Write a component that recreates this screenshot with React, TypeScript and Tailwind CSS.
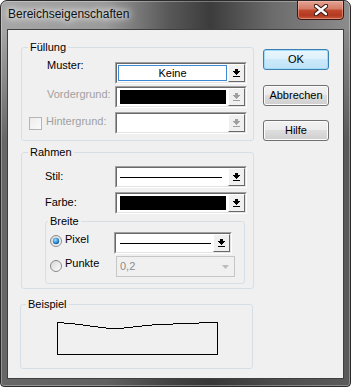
import React from "react";

const DropArrow = ({ disabled }: { disabled?: boolean }) => (
  <svg width="7" height="8" viewBox="0 0 7 8" shapeRendering="crispEdges" fill={disabled ? "#a0a0a0" : "#000"}>
    <rect x="2" y="0" width="3" height="2" />
    <rect x="0" y="2" width="7" height="1" />
    <rect x="1" y="3" width="5" height="1" />
    <rect x="2" y="4" width="3" height="1" />
    <rect x="3" y="5" width="1" height="1" />
    <rect x="0" y="7" width="7" height="1" />
  </svg>
);

function Combo({
  className,
  arrowDisabled,
  children,
}: {
  className: string;
  arrowDisabled?: boolean;
  children?: React.ReactNode;
}) {
  return (
    <div className={`flex h-[22px] shrink-0 border border-t-[#a0a0a0] border-l-[#a0a0a0] border-r-white border-b-white ${className}`}>
      <div className="flex flex-1 border border-t-[#696969] border-l-[#696969] border-r-[#e3e3e3] border-b-[#e3e3e3] bg-white">
        <div className="flex flex-1 p-[1px]">{children}</div>
        <div className="flex w-[17px] items-center justify-center border border-t-white border-l-white border-r-[#696969] border-b-[#696969] bg-[#f0f0f0]">
          <DropArrow disabled={arrowDisabled} />
        </div>
      </div>
    </div>
  );
}

function Group({
  title,
  className = "",
  legendClass = "ml-[6px]",
  children,
}: {
  title: string;
  className?: string;
  legendClass?: string;
  children: React.ReactNode;
}) {
  return (
    <fieldset className={`flex flex-col rounded-[3px] border border-[#d5dfe5] ${className}`}>
      <legend className={`px-[2px] text-[11px] leading-[12px] ${legendClass}`}>{title}</legend>
      {children}
    </fieldset>
  );
}

const Radio = ({ checked }: { checked?: boolean }) => (
  <svg width="12" height="12" viewBox="0 0 12 12" className="shrink-0">
    <defs>
      <linearGradient id={checked ? "rbg1" : "rbg2"} x1="0" y1="0" x2="1" y2="1">
        <stop offset="0" stopColor="#d6d6d6" />
        <stop offset="1" stopColor="#ffffff" />
      </linearGradient>
      <radialGradient id="rdot" cx="0.4" cy="0.35" r="0.7">
        <stop offset="0" stopColor="#a9ddf9" />
        <stop offset="0.6" stopColor="#2c8fd6" />
        <stop offset="1" stopColor="#11508f" />
      </radialGradient>
    </defs>
    <circle cx="6" cy="6" r="5.5" fill={`url(#${checked ? "rbg1" : "rbg2"})`} stroke="#8a8a8a" />
    {checked && <circle cx="6" cy="6" r="3.2" fill="url(#rdot)" />}
  </svg>
);

const btnBase = "flex h-[21px] w-[66px] items-center justify-center rounded-[3px] border text-[11px] leading-none text-black";
const btnGray =
  "border-[#707070] bg-[linear-gradient(#f2f2f2_0%,#ebebeb_50%,#dddddd_50%,#cfcfcf_100%)] shadow-[inset_0_0_0_1px_#fcfcfc]";
const btnDefault =
  "border-[#3c7fb1] bg-[linear-gradient(#eaf6fd_0%,#dcf0fb_50%,#cbe9fa_50%,#bfe3f7_100%)] shadow-[inset_0_0_0_1px_#9fdcf8]";

export default function App() {
  return (
    <div className="font-['Liberation_Sans',Arial,sans-serif] text-[11px] text-black">
      <div className="flex h-[387px] w-[351px] flex-col overflow-hidden rounded-t-[7px] rounded-b-[4px] border border-[#2a2a2a] bg-[linear-gradient(180deg,rgba(0,0,0,0)_0px,rgba(0,0,0,0)_28px,rgba(50,50,50,0.55)_140px),linear-gradient(90deg,#a6a6a6_0%,#9a9a9a_30%,#585858_48%,#3c3c3c_60%,#6c6c6c_78%,#8c8c8c_100%)] shadow-[inset_0_0_0_1px_rgba(255,255,255,0.3)]">
        <div className="flex h-[28px] shrink-0 items-start justify-between pl-[7px] pr-[6px]">
          <span className="mt-[6px] text-[12px] leading-[14px] text-[#111] [text-shadow:0_0_6px_#fff,0_0_10px_#fff]">
            Bereichseigenschaften
          </span>
          <div className="-mt-px flex h-[20px] w-[47px] items-center justify-center rounded-b-[4px] border border-[#3f1510] bg-[linear-gradient(#e4a393_0%,#d27a65_45%,#c2482e_50%,#b33a20_80%,#c65a3c_100%)] shadow-[inset_0_0_0_1px_rgba(255,200,190,0.45)]">
            <svg width="14" height="12" viewBox="0 0 14 12">
              <path d="M2 2 L12 10 M12 2 L2 10" stroke="#3a1a16" strokeWidth="4.5" strokeLinecap="round" />
              <path d="M2 2 L12 10 M12 2 L2 10" stroke="#ffffff" strokeWidth="2.4" strokeLinecap="round" />
            </svg>
          </div>
        </div>

        <div className="mx-[6px] flex h-[350px] shrink-0 border border-[#3f3f3f] bg-[#f0f0f0]">
          <div className="ml-[13px] flex w-[233px] flex-col pt-[11px]">
            <Group title="Füllung" className="w-[233px] pb-[6px]">
              <div className="mt-[9px] flex items-start">
                <div className="-mt-[3px] w-[93px] pl-[25px] leading-[13px]">Muster:</div>
                <Combo className="w-[132px]">
                  <div className="flex flex-1 items-center justify-center border border-[#3c8ad8] leading-none">Keine</div>
                </Combo>
              </div>
              <div className="mt-[2px] flex items-start">
                <div className="mt-[2px] w-[93px] pl-[25px] leading-[13px] text-[#a0a0a0]">Vordergrund:</div>
                <Combo className="w-[132px]" arrowDisabled>
                  <div className="m-[1px] ml-[2px] flex-1 bg-black" />
                </Combo>
              </div>
              <div className="mt-[4px] flex items-start">
                <div className="flex w-[93px] items-start pl-[7px]">
                  <div className="mt-[5px] h-[13px] w-[13px] shrink-0 border border-[#b5b5b5] bg-[linear-gradient(135deg,#ececec,#fbfbfb)]" />
                  <div className="ml-[4px] mt-[3px] leading-[13px] text-[#a0a0a0]">Hintergrund:</div>
                </div>
                <Combo className="w-[132px]" arrowDisabled />
              </div>
            </Group>

            <Group title="Rahmen" className="mt-[5px] w-[233px] pb-[4px]">
              <div className="mt-[8px] flex items-start">
                <div className="mt-[4px] w-[93px] pl-[23px] leading-[13px]">Stil:</div>
                <Combo className="w-[132px]">
                  <div className="flex flex-1 items-center pl-[2px] pr-[5px]">
                    <div className="h-px flex-1 bg-black" />
                  </div>
                </Combo>
              </div>
              <div className="mt-[4px] flex items-start">
                <div className="mt-[4px] w-[93px] pl-[23px] leading-[13px]">Farbe:</div>
                <Combo className="w-[132px]">
                  <div className="m-[1px] ml-[2px] flex-1 bg-black" />
                </Combo>
              </div>
              <Group title="Breite" className="ml-[23px] mt-[1px] w-[200px] pb-[6px]" legendClass="ml-[2px]">
                <div className="mt-[5px] flex items-start">
                  <div className="flex w-[68px] items-start pl-[4px]">
                    <div className="mt-[3px]">
                      <Radio checked />
                    </div>
                    <div className="ml-[3px] mt-px leading-[13px]">Pixel</div>
                  </div>
                  <Combo className="w-[118px]">
                    <div className="flex flex-1 items-center pl-[3px] pr-[1px]">
                      <div className="h-px flex-1 bg-black" />
                    </div>
                  </Combo>
                </div>
                <div className="mt-[2px] flex items-start">
                  <div className="flex w-[70px] items-start pl-[4px]">
                    <div className="mt-[4px]">
                      <Radio />
                    </div>
                    <div className="ml-[3px] mt-px leading-[13px]">Punkte</div>
                  </div>
                  <div className="flex h-[21px] w-[119px] items-center justify-between border border-[#c6c6c6] bg-[#f0f0f0] pl-[3px] pr-[5px] text-[#8d8d8d]">
                    <span className="leading-none">0,2</span>
                    <svg width="7" height="4" viewBox="0 0 7 4">
                      <path d="M0 0 L7 0 L3.5 4 Z" fill="#bcbcbc" />
                    </svg>
                  </div>
                </div>
              </Group>
            </Group>

            <Group title="Beispiel" className="-ml-px mt-[9px] w-[233px] pb-[13px]" legendClass="ml-[5px]">
              <svg width="162" height="34" viewBox="0 0 162 34" className="ml-[36px] mt-[11px]" shapeRendering="crispEdges">
                <path
                  d="M0.5 1.5 L13 2.5 L23 3.5 L33 5 L53 7.5 L63 7.5 L80 5.5 L100 3.5 L133 2.5 L151 1.5 L160.5 1.5 L160.5 33.5 L0.5 33.5 Z"
                  fill="none"
                  stroke="#000"
                  strokeWidth="1"
                />
              </svg>
            </Group>
          </div>

          <div className="ml-[9px] flex w-[66px] flex-col pt-[19px]">
            <button className={`${btnBase} ${btnDefault}`}>OK</button>
            <button className={`${btnBase} ${btnGray} mt-[15px]`}>Abbrechen</button>
            <button className={`${btnBase} ${btnGray} mt-[14px]`}>Hilfe</button>
          </div>
        </div>
      </div>
    </div>
  );
}
